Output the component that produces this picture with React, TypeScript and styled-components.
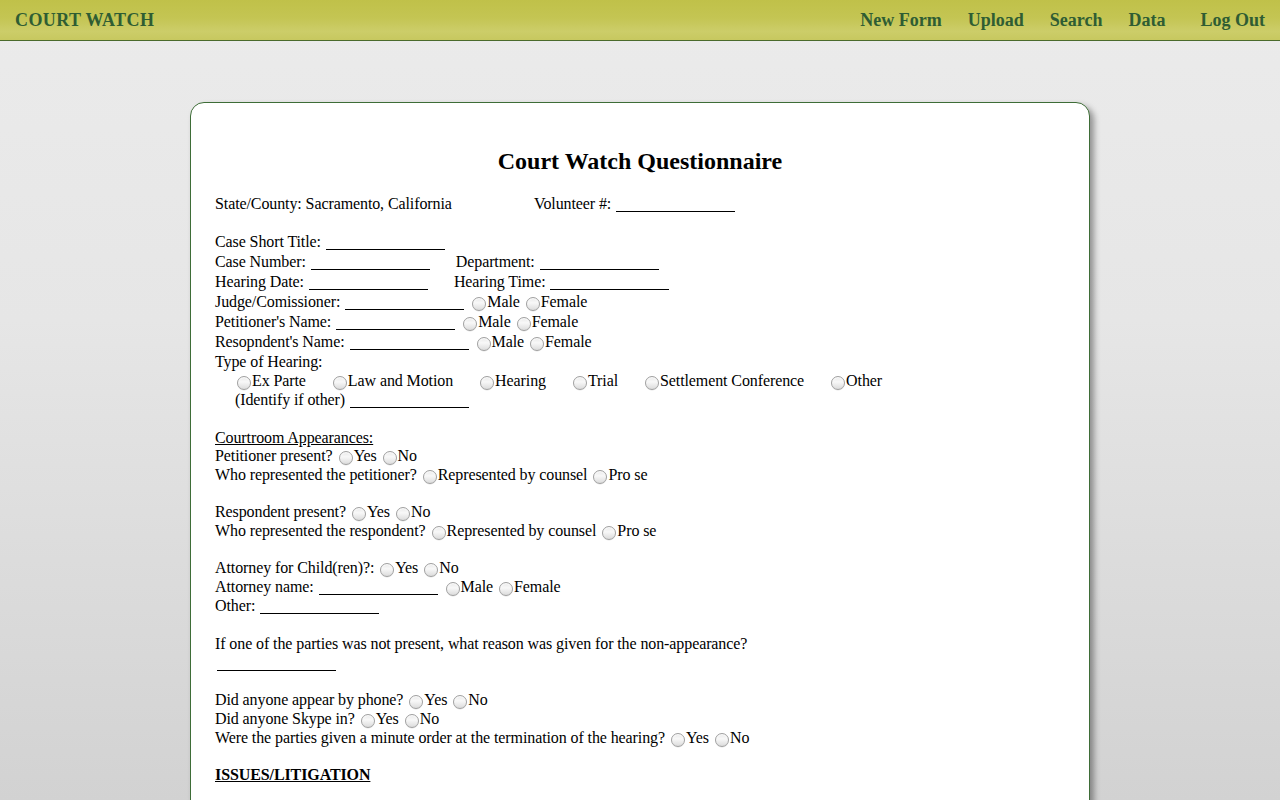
import React from "react";
import styled, { createGlobalStyle } from "styled-components";

const Global = createGlobalStyle`
  html, body {
    margin: 0;
    padding: 0;
    min-height: 100%;
  }
  body {
    background: linear-gradient(to bottom, #ebebeb 0%, #e6e6e6 40%, #d2d2d2 100%) fixed;
    font-family: "Liberation Serif", "Times New Roman", serif;
    color: #000;
  }
`;

const Header = styled.header`
  height: 40px;
  border-bottom: 1px solid #4a6a2c;
  background: linear-gradient(to bottom, #c0c149 0%, #c4c553 45%, #cccd69 78%, #c7c85f 100%);
  display: flex;
  align-items: center;
  justify-content: space-between;
  padding: 0 15px;
  font-family: "Liberation Serif", "Times New Roman", serif;
  font-weight: bold;
  font-size: 18px;
  color: #2f5d33;
`;

const Brand = styled.div`
  letter-spacing: 0.4px;
`;

const Nav = styled.nav`
  display: flex;
  align-items: center;
`;

const NavLink = styled.a<{ $gap?: number }>`
  color: #2f5d33;
  text-decoration: none;
  margin-left: ${(p) => p.$gap ?? 26}px;
`;

const Main = styled.main`
  display: flex;
  justify-content: center;
  padding-top: 61px;
`;

const Card = styled.section`
  box-sizing: border-box;
  width: 900px;
  background: #fff;
  border: 1px solid #3e6d37;
  border-radius: 14px;
  box-shadow: 4px 4px 6px rgba(0, 0, 0, 0.38);
  padding: 43px 24px 200px 24px;
  font-size: 16px;
  letter-spacing: -0.1px;
`;

const Title = styled.h1`
  margin: 0 0 18px 0;
  text-align: center;
  font-size: 24px;
  line-height: 30px;
  font-weight: bold;
  letter-spacing: 0;
`;

const Row = styled.div<{ $h?: number; $indent?: number }>`
  display: flex;
  align-items: center;
  height: ${(p) => p.$h ?? 19}px;
  line-height: ${(p) => p.$h ?? 19}px;
  padding-left: ${(p) => p.$indent ?? 0}px;
  white-space: pre;
`;

const Spacer = styled.div<{ $h?: number }>`
  height: ${(p) => p.$h ?? 18}px;
`;

const Col = styled.div<{ $w: number }>`
  width: ${(p) => p.$w}px;
  flex: none;
`;

const Field = styled.input.attrs({ type: "text" })<{ $mr?: number; $ml?: number }>`
  box-sizing: border-box;
  width: 119px;
  height: 16px;
  align-self: flex-start;
  margin: 2px ${(p) => p.$mr ?? 0}px 0 ${(p) => p.$ml ?? 5}px;
  padding: 0;
  border: 0;
  border-bottom: 1px solid #000;
  background: transparent;
  outline: none;
  font: inherit;
`;

const Radio = styled.input.attrs({ type: "radio" })<{ $ml?: number }>`
  appearance: none;
  -webkit-appearance: none;
  box-sizing: border-box;
  width: 14px;
  height: 14px;
  margin: 4px 1px 0 ${(p) => p.$ml ?? 6}px;
  border-radius: 50%;
  border: 1px solid #a0a0a0;
  background: linear-gradient(to bottom, #e9e9e9 0%, #f8f8f8 40%, #dcdcdc 100%);
  box-shadow: inset 0 1px 1px rgba(255, 255, 255, 0.9), 0 0.5px 0.5px rgba(0, 0, 0, 0.12);
  flex: none;
`;

const Option = styled.span`
  display: inline;
`;

const Heading = styled.span<{ $bold?: boolean }>`
  text-decoration: underline;
  font-weight: ${(p) => (p.$bold ? "bold" : "normal")};
`;

type Choice = { label: string; ml?: number };

const Choices: React.FC<{ name: string; items: Choice[] }> = ({ name, items }) => (
  <>
    {items.map((c) => (
      <React.Fragment key={c.label}>
        <Radio name={name} $ml={c.ml ?? 6} />
        <Option>{c.label}</Option>
      </React.Fragment>
    ))}
  </>
);

const hearingTypes = ["Ex Parte", "Law and Motion", "Hearing", "Trial", "Settlement Conference", "Other"];

export default function App() {
  return (
    <>
      <Global />
      <Header>
        <Brand>COURT WATCH</Brand>
        <Nav>
          <NavLink $gap={0}>New Form</NavLink>
          <NavLink>Upload</NavLink>
          <NavLink>Search</NavLink>
          <NavLink>Data</NavLink>
          <NavLink $gap={35}>Log Out</NavLink>
        </Nav>
      </Header>
      <Main>
        <Card>
          <Title>Court Watch Questionnaire</Title>
          <Row $h={20}>
            <Col $w={319}>State/County: Sacramento, California</Col>
            Volunteer #:<Field />
          </Row>
          <Spacer $h={18} />
          <Row $h={20}>
            Case Short Title:<Field />
          </Row>
          <Row $h={20}>
            Case Number:<Field $mr={26} />Department:<Field />
          </Row>
          <Row $h={20}>
            Hearing Date:<Field $mr={26} />Hearing Time:<Field />
          </Row>
          <Row $h={20}>
            Judge/Comissioner:<Field />
            <Choices name="judge" items={[{ label: "Male", ml: 8 }, { label: "Female" }]} />
          </Row>
          <Row $h={20}>
            Petitioner's Name:<Field />
            <Choices name="pet" items={[{ label: "Male", ml: 8 }, { label: "Female" }]} />
          </Row>
          <Row $h={20}>
            Resopndent's Name:<Field />
            <Choices name="resp" items={[{ label: "Male", ml: 8 }, { label: "Female" }]} />
          </Row>
          <Row $h={19}>Type of Hearing:</Row>
          <Row $h={19} $indent={16}>
            {hearingTypes.map((t, i) => (
              <React.Fragment key={t}>
                <Radio name="type" $ml={i === 0 ? 6 : 27} />
                <Option>{t}</Option>
              </React.Fragment>
            ))}
          </Row>
          <Row $h={20} $indent={20}>
            (Identify if other)<Field />
          </Row>
          <Spacer $h={18} />
          <Row $h={19}>
            <Heading>Courtroom Appearances:</Heading>
          </Row>
          <Row $h={18}>
            Petitioner present?
            <Choices name="pp" items={[{ label: "Yes" }, { label: "No" }]} />
          </Row>
          <Row $h={19}>
            Who represented the petitioner?
            <Choices name="pr" items={[{ label: "Represented by counsel" }, { label: "Pro se" }]} />
          </Row>
          <Spacer $h={18} />
          <Row $h={19}>
            Respondent present?
            <Choices name="rp" items={[{ label: "Yes" }, { label: "No" }]} />
          </Row>
          <Row $h={19}>
            Who represented the respondent?
            <Choices name="rr" items={[{ label: "Represented by counsel" }, { label: "Pro se" }]} />
          </Row>
          <Spacer $h={18} />
          <Row $h={19}>
            Attorney for Child(ren)?:
            <Choices name="ac" items={[{ label: "Yes" }, { label: "No" }]} />
          </Row>
          <Row $h={19}>
            Attorney name:<Field />
            <Choices name="an" items={[{ label: "Male", ml: 8 }, { label: "Female" }]} />
          </Row>
          <Row $h={20}>
            Other:<Field />
          </Row>
          <Spacer $h={18} />
          <Row $h={19}>If one of the parties was not present, what reason was given for the non-appearance?</Row>
          <Row $h={20}>
            <Field $ml={2} />
          </Row>
          <Spacer $h={17} />
          <Row $h={19}>
            Did anyone appear by phone?
            <Choices name="ph" items={[{ label: "Yes" }, { label: "No" }]} />
          </Row>
          <Row $h={19}>
            Did anyone Skype in?
            <Choices name="sk" items={[{ label: "Yes" }, { label: "No" }]} />
          </Row>
          <Row $h={19}>
            Were the parties given a minute order at the termination of the hearing?
            <Choices name="mo" items={[{ label: "Yes" }, { label: "No" }]} />
          </Row>
          <Spacer $h={18} />
          <Row $h={19}>
            <Heading $bold>ISSUES/LITIGATION</Heading>
          </Row>
        </Card>
      </Main>
    </>
  );
}
